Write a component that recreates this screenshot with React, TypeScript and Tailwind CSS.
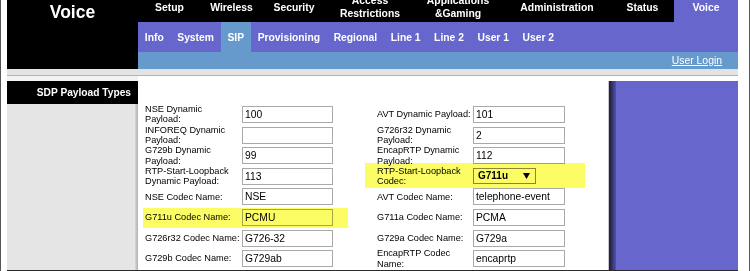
import React from "react";

type Row = {
  l: string[];
  v: string;
  r: string[];
  rv?: string;
  select?: string;
};

const rows: Row[] = [
  { l: ["NSE Dynamic", "Payload:"], v: "100", r: ["AVT Dynamic Payload:"], rv: "101" },
  { l: ["INFOREQ Dynamic", "Payload:"], v: "", r: ["G726r32 Dynamic", "Payload:"], rv: "2" },
  { l: ["G729b Dynamic", "Payload:"], v: "99", r: ["EncapRTP Dynamic", "Payload:"], rv: "112" },
  { l: ["RTP-Start-Loopback", "Dynamic Payload:"], v: "113", r: ["RTP-Start-Loopback", "Codec:"], select: "G711u" },
  { l: ["NSE Codec Name:"], v: "NSE", r: ["AVT Codec Name:"], rv: "telephone-event" },
  { l: ["G711u Codec Name:"], v: "PCMU", r: ["G711a Codec Name:"], rv: "PCMA" },
  { l: ["G726r32 Codec Name:"], v: "G726-32", r: ["G729a Codec Name:"], rv: "G729a" },
  { l: ["G729b Codec Name:"], v: "G729ab", r: ["EncapRTP Codec", "Name:"], rv: "encaprtp" },
];

function Label({ lines, w }: { lines: string[]; w: string }) {
  return (
    <div className={`${w} shrink-0 text-[9.2px] leading-[10.4px] text-black whitespace-nowrap`}>
      {lines.map((t, i) => (
        <div key={i}>{t}</div>
      ))}
    </div>
  );
}

function Field({ value, w }: { value: string; w: string }) {
  return (
    <div
      className={`${w} h-[17px] shrink-0 border border-[#a9a9a9] bg-white pl-[2px] text-[10.3px] leading-[15px] text-black whitespace-nowrap overflow-hidden`}
    >
      {value}
    </div>
  );
}

const topNav: { t: string[]; w: string }[] = [
  { t: ["Setup"], w: "w-[63px]" },
  { t: ["Wireless"], w: "w-[61px]" },
  { t: ["Security"], w: "w-[64px]" },
  { t: ["Access", "Restrictions"], w: "w-[88px]" },
  { t: ["Applications", "&Gaming"], w: "w-[88px]" },
  { t: ["Administration"], w: "w-[110px]" },
  { t: ["Status"], w: "w-[61px]" },
];

const subNav = ["Info", "System", "SIP", "Provisioning", "Regional", "Line 1", "Line 2", "User 1", "User 2"];

export default function App() {
  return (
    <div
      className="w-[750px] h-[271px] overflow-hidden bg-white border-l border-r border-[#555555] flex pl-[6px]"
      style={{ fontFamily: '"Liberation Sans", Arial, sans-serif' }}
    >
      <div className="w-[731px] h-[271px] flex flex-col border-b border-[#2a2a2a] shrink-0">
        {/* Header */}
        <div className="h-[69px] flex shrink-0">
          <div className="w-[131px] bg-black shrink-0">
            <div className="h-[22px] pt-[2px] text-center text-white font-bold text-[17.5px] leading-[20px]">
              Voice
            </div>
          </div>
          <div className="w-[600px] flex flex-col">
            <div className="h-[22px] flex bg-black">
              {topNav.map((n, i) => (
                <div key={i} className={`${n.w} h-[14px] flex items-center justify-center shrink-0`}>
                  <div className="text-white font-bold text-[10.4px] leading-[13px] text-center whitespace-nowrap">
                    {n.t.map((x, j) => (
                      <div key={j}>{x}</div>
                    ))}
                  </div>
                </div>
              ))}
              <div className="w-[1px]" />
              <div className="w-[64px] h-[22px] bg-[#6666cc] flex justify-center">
                <div className="h-[14px] flex items-center text-white font-bold text-[10.4px] leading-[13px]">
                  Voice
                </div>
              </div>
            </div>
            <div className="h-[30px] bg-[#6666cc] flex items-stretch">
              {subNav.map((s) => (
                <div
                  key={s}
                  className={`px-[6.8px] flex items-center text-white font-bold text-[10.3px] leading-[13px] whitespace-nowrap ${
                    s === "SIP" ? "bg-[#6699cc]" : ""
                  }`}
                >
                  {s}
                </div>
              ))}
            </div>
            <div className="h-[17px] bg-[#6699cc] flex items-center justify-end pr-[16px]">
              <span className="text-white underline text-[10.4px] leading-[13px]">User Login</span>
            </div>
          </div>
        </div>

        {/* grey bar */}
        <div className="h-[7px] bg-[#e3e3e3] border-b border-[#b5b5b5] shrink-0" />

        {/* Body */}
        <div className="flex-1 flex min-h-0">
          <div className="w-[131px] shrink-0 flex flex-col">
            <div className="h-[5px] bg-[#f2f2f2]" />
            <div className="h-[23px] bg-black flex items-center justify-end pr-[7px]">
              <span className="text-white font-bold text-[10.2px] leading-[13px] whitespace-nowrap">
                SDP Payload Types
              </span>
            </div>
            <div className="flex-1 flex">
              <div className="flex-1 bg-[#e5e5e5]" />
              <div className="w-[3px] bg-linear-to-r from-[#d8d8d8] to-[#b0b0b0]" />
            </div>
          </div>

          <div className="w-[600px] shrink-0 flex relative bg-white">
            <div className="w-[470px] shrink-0 pt-[28.2px] overflow-hidden">
              {rows.map((r, i) => (
                <div key={i} className="h-[20.6px] flex items-center pl-[7px]">
                  <Label lines={r.l} w="w-[97px]" />
                  <Field value={r.v} w="w-[91px]" />
                  <div className="w-[44px] shrink-0" />
                  <Label lines={r.r} w="w-[96px]" />
                  {r.select ? (
                    <div className="w-[63px] h-[16px] shrink-0 border border-[#8a8a8a] bg-white flex items-center pl-[4px] pr-[4px] justify-between">
                      <span className="font-bold text-[10px] leading-[12px] text-black">{r.select}</span>
                      <svg width="7" height="6" viewBox="0 0 7 6" className="mr-[1px]">
                        <polygon points="0,0 7,0 3.5,6" fill="#000" />
                      </svg>
                    </div>
                  ) : (
                    <Field value={r.rv ?? ""} w="w-[92px]" />
                  )}
                </div>
              ))}
            </div>
            <div className="w-[130px] shrink-0 mt-[5px] flex">
              <div className="w-[1px] bg-[#c8c8c8]" />
              <div className="w-[7px] bg-linear-to-r from-[#1c1c3c] to-[#5252aa]" />
              <div className="flex-1 bg-[#6666cc]" />
            </div>

            {/* highlighter overlays */}
            <div className="absolute left-[227px] top-[87px] w-[220px] h-[25px] bg-[#fcfc64] mix-blend-multiply pointer-events-none" />
            <div className="absolute left-[5px] top-[132px] w-[205px] h-[20px] bg-[#fcfc64] mix-blend-multiply pointer-events-none" />
          </div>
        </div>
      </div>
    </div>
  );
}
